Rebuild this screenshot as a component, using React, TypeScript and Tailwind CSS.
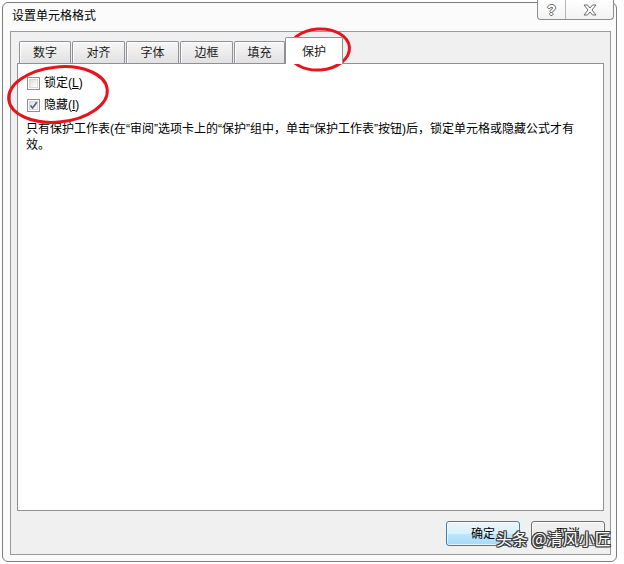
import React from "react";

const FONT = "font-['Liberation_Sans','Noto_Sans_CJK_SC',sans-serif]";

function Tab({ label, w }: { label: string; w: string }) {
  return (
    <div
      className={`${w} h-[22px] mr-px border border-b-0 border-[#8e9096] rounded-t-[2px] bg-[linear-gradient(to_bottom,#f6f6f6_0%,#ececec_50%,#e1e1e1_100%)] shadow-[inset_1px_1px_0_#ffffff] flex items-center justify-center text-[12px] text-[#1a1a1a] leading-none`}
    >
      {label}
    </div>
  );
}

function CheckBox({ checked }: { checked: boolean }) {
  return (
    <div className="w-[13px] h-[13px] border border-[#8e8f8f] bg-white p-px shrink-0">
      <div className="w-full h-full bg-[linear-gradient(135deg,#dcdcdc_0%,#f2f2f2_60%,#ffffff_100%)] border border-[#d8d8d8] relative">
        {checked && (
          <svg viewBox="0 0 9 9" className="absolute inset-0 w-[9px] h-[9px] -left-px -top-px">
            <path d="M1.5 4.5 L3.6 7 L7.8 1.2" fill="none" stroke="#4a5b8c" strokeWidth="1.6" />
          </svg>
        )}
      </div>
    </div>
  );
}

function Button({ label, primary }: { label: string; primary?: boolean }) {
  return (
    <div
      className={`w-[74px] h-[25px] rounded-[3px] border flex items-center justify-center text-[12px] text-black ${
        primary
          ? "border-[#3c7fb1] bg-[linear-gradient(to_bottom,#eaf6fd_0%,#d9f0fc_50%,#bee6fd_51%,#a7d9f5_100%)] shadow-[inset_0_0_0_1px_#ffffffaa]"
          : "border-[#707070] bg-[linear-gradient(to_bottom,#f2f2f2_0%,#ebebeb_50%,#dddddd_51%,#cfcfcf_100%)] shadow-[inset_0_0_0_1px_#fcfcfc]"
      }`}
    >
      {label}
    </div>
  );
}

export default function App() {
  return (
    <div className={`w-[624px] h-[564px] bg-white relative overflow-hidden ${FONT}`}>
      {/* window */}
      <div className="mt-[2px] ml-[2px] w-[615px] h-[560px] border border-[#7d7d7d] rounded-[6px] bg-[#fbfbfb] flex flex-col px-[7px] pb-[6px] pr-[5px]">
        {/* title row */}
        <div className="h-[28px] flex justify-between items-start shrink-0">
          <div className="pt-[5px] pl-[2px] text-[12px] leading-[16px] text-black">设置单元格格式</div>
          <div className="-mt-[3px] -mr-[3px] flex h-[20px] border border-t-0 border-[#8c8c8c] rounded-b-[4px] bg-[linear-gradient(to_bottom,#ffffff_0%,#f3f3f3_100%)] overflow-hidden">
            <div className="w-[28px] h-full border-r border-[#b5b5b5] flex items-center justify-center">
              <span className="text-[14px] font-bold leading-none text-white [text-shadow:1px_0_#6b6b6b,-1px_0_#6b6b6b,0_1px_#6b6b6b,0_-1px_#6b6b6b] font-['Liberation_Sans',sans-serif]">
                ?
              </span>
            </div>
            <div className="w-[47px] h-full flex items-center justify-center">
              <svg viewBox="0 0 14 12" className="w-[14px] h-[12px]">
                <path
                  d="M1 1 H4.5 L7 4 L9.5 1 H13 L9 6 L13 11 H9.5 L7 8 L4.5 11 H1 L5 6 Z"
                  fill="#ffffff"
                  stroke="#6a6a6a"
                  strokeWidth="1"
                  strokeLinejoin="round"
                />
              </svg>
            </div>
          </div>
        </div>

        {/* client */}
        <div className="flex-1 border border-[#9a9a9a] bg-[#f0f0f0] flex flex-col pt-[5px] px-[6px] pb-[8px]">
          {/* tabs */}
          <div className="h-[26px] flex items-end pl-[2px] shrink-0">
            <Tab label="数字" w="w-[52px]" />
            <Tab label="对齐" w="w-[53px]" />
            <Tab label="字体" w="w-[53px]" />
            <Tab label="边框" w="w-[53px]" />
            <Tab label="填充" w="w-[51px]" />
            <div className="w-[58px] h-[27px] -mb-px -ml-px relative z-10 border border-b-0 border-[#8e9096] rounded-t-[2px] bg-white flex justify-center pt-[7px] text-[12px] leading-[14px] text-[#1a1a1a]">
              保护
            </div>
          </div>

          {/* panel */}
          <div className="h-[448px] border border-[#8e9096] bg-white pt-[8px] pl-[8px] text-[12px] text-black shrink-0">
            <div className="h-[22px] flex items-center ml-px">
              <CheckBox checked={false} />
              <span className="ml-[4px] leading-[16px]">
                锁定(<span className="underline">L</span>)
              </span>
            </div>
            <div className="h-[22px] flex items-center ml-px">
              <CheckBox checked={true} />
              <span className="ml-[4px] leading-[16px]">
                隐藏(<span className="underline">I</span>)
              </span>
            </div>
            <div className="mt-[5px] leading-[16px] whitespace-nowrap">
              只有保护工作表(在“审阅”选项卡上的“保护”组中，单击“保护工作表”按钮)后，锁定单元格或隐藏公式才有
              <br />
              效。
            </div>
          </div>

          {/* buttons */}
          <div className="mt-[10px] flex justify-end gap-[11px] -mr-px">
            <Button label="确定" primary />
            <Button label="取消" />
          </div>
        </div>
      </div>

      {/* red annotation ellipses */}
      <svg className="absolute inset-0 pointer-events-none" width="624" height="564" viewBox="0 0 624 564">
        <ellipse cx="319" cy="49.5" rx="30.5" ry="20.5" fill="none" stroke="#e3161d" strokeWidth="3" transform="rotate(-4 319 49.5)" />
        <ellipse cx="58" cy="94.5" rx="49.5" ry="27.5" fill="none" stroke="#e3161d" strokeWidth="3" transform="rotate(-6 58 94.5)" />
      </svg>

      {/* watermark */}
      <div className="absolute left-[496px] top-[527px] text-[16px] leading-[22px] text-white whitespace-nowrap font-['Noto_Sans_CJK_SC',sans-serif] [text-shadow:1px_0_#3a3a3a,-1px_0_#3a3a3a,0_1px_#3a3a3a,0_-1px_#3a3a3a,1px_1px_#3a3a3a,-1px_-1px_#3a3a3a,1px_-1px_#3a3a3a,-1px_1px_#3a3a3a]">
        头条 @清风小匠
      </div>
    </div>
  );
}
